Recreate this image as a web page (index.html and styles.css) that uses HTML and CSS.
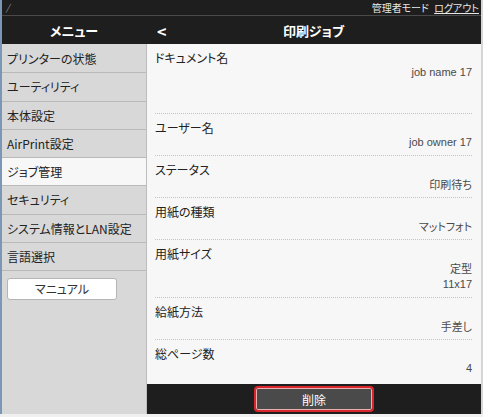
FILE: index.html
```html
<!DOCTYPE html>
<html lang="ja">
<head>
<meta charset="utf-8">
<link rel="stylesheet" href="styles.css">
</head>
<body>
<div class="frame">
  <div class="topbar">
    <span class="slash">/</span>
    <span class="admin">管理者モード <a class="logout">ログアウト</a></span>
  </div>
  <div class="header">
    <div class="menu-title">メニュー</div>
    <div class="page-title">
      <span class="back">&lt;</span>
      <span class="title">印刷ジョブ</span>
    </div>
  </div>
  <div class="main">
    <nav class="sidebar">
      <div class="item">プリンターの状態</div>
      <div class="item">ユーティリティ</div>
      <div class="item">本体設定</div>
      <div class="item">AirPrint設定</div>
      <div class="item active">ジョブ管理</div>
      <div class="item">セキュリティ</div>
      <div class="item">システム情報とLAN設定</div>
      <div class="item">言語選択</div>
      <div class="manual-wrap"><button class="manual">マニュアル</button></div>
    </nav>
    <section class="content">
      <div class="rows">
        <div class="row tall">
          <div class="label">ドキュメント名</div>
          <div class="value latin">job name 17</div>
        </div>
        <div class="row">
          <div class="label">ユーザー名</div>
          <div class="value latin">job owner 17</div>
        </div>
        <div class="row">
          <div class="label">ステータス</div>
          <div class="value">印刷待ち</div>
        </div>
        <div class="row">
          <div class="label">用紙の種類</div>
          <div class="value">マットフォト</div>
        </div>
        <div class="row">
          <div class="label">用紙サイズ</div>
          <div class="value">定型<br><span class="latin">11x17</span></div>
        </div>
        <div class="row">
          <div class="label">給紙方法</div>
          <div class="value">手差し</div>
        </div>
        <div class="row last">
          <div class="label">総ページ数</div>
          <div class="value latin">4</div>
        </div>
      </div>
      <div class="footer">
        <button class="delete">削除</button>
      </div>
    </section>
  </div>
</div>
</body>
</html>
```
FILE: styles.css
```css
html, body {
  margin: 0;
  padding: 0;
  width: 483px;
  height: 417px;
  overflow: hidden;
  background: #f0f0f0;
  font-family: "Noto Sans CJK JP", "Liberation Sans", sans-serif;
  font-feature-settings: "palt";
}
.frame {
  width: 479px;
  height: 414px;
  border-left: 2px solid #7b97b6;
  border-right: 2px solid #d6d6d6;
  display: flex;
  flex-direction: column;
}
.topbar {
  height: 15px;
  background: #1e1e1e;
  border-bottom: 1px solid #4a4a4a;
  display: flex;
  justify-content: space-between;
  align-items: center;
  padding: 0 2px 0 4px;
  color: #ddd;
  font-size: 10px;
  line-height: 15px;
}
.slash { color: #999; font-style: italic; font-size: 9px; }
.admin { color: #e8e8e8; }
.logout { color: #e8e8e8; text-decoration: underline; margin-left: 3px; }
.header {
  height: 28px;
  background: #1e1e1e;
  display: flex;
  color: #fff;
  font-weight: bold;
  font-size: 13px;
}
.menu-title {
  width: 144px;
  display: flex;
  align-items: center;
  justify-content: center;
}
.page-title {
  flex: 1;
  display: flex;
  align-items: center;
  justify-content: center;
  position: relative;
}
.back {
  position: absolute;
  left: 11px;
  top: 3px;
  font-size: 16px;
  font-weight: bold;
  color: #fff;
}
.main {
  flex: 1;
  display: flex;
  min-height: 0;
}
.sidebar {
  width: 144px;
  background: #d8d8d8;
  display: flex;
  flex-direction: column;
  padding-top: 1px;
}
.item {
  height: 27.3px;
  border-bottom: 1px solid #b9b9b9;
  font-size: 12px;
  color: #222;
  line-height: 27px;
  padding-left: 5px;
  white-space: nowrap;
}
.item.active { background: #f7f7f7; margin-right: -1px; }
.manual-wrap { padding: 4px 28px 0 5px; }
.manual {
  width: 110px;
  height: 22px;
  background: #fff;
  border: 1px solid #b5b5b5;
  border-radius: 3px;
  font-family: inherit;
  font-feature-settings: "palt";
  font-size: 12px;
  color: #333;
  padding: 0;
}
.content {
  flex: 1;
  display: flex;
  flex-direction: column;
  background: #f7f7f7;
  border-left: 1px solid #bdbdbd;
  min-width: 0;
}
.rows {
  flex: 1;
  overflow: hidden;
  padding: 0 9px 0 8px;
}
.row {
  border-bottom: 1px dotted #c4c4c4;
  padding: 6px 0 5px;
}
.row.tall { padding-bottom: 33px; }
.row.last { border-bottom: none; }
.label {
  font-size: 12px;
  color: #222;
  line-height: 15px;
}
.value {
  text-align: right;
  font-size: 11px;
  color: #4a4a4a;
  line-height: 15px;
}
.latin { font-family: "Liberation Sans", "Noto Sans CJK JP", sans-serif; font-size: 11px; }
.footer {
  height: 30px;
  background: #1e1e1e;
  display: flex;
  justify-content: center;
  align-items: center;
}
.delete {
  width: 120px;
  height: 26px;
  background: #4a4a4a;
  border: 2px solid #d9262c;
  box-shadow: inset 0 0 0 1px #e7b0b0;
  border-radius: 4px;
  color: #fff;
  font-family: inherit;
  font-size: 12px;
  padding: 0;
}
```
